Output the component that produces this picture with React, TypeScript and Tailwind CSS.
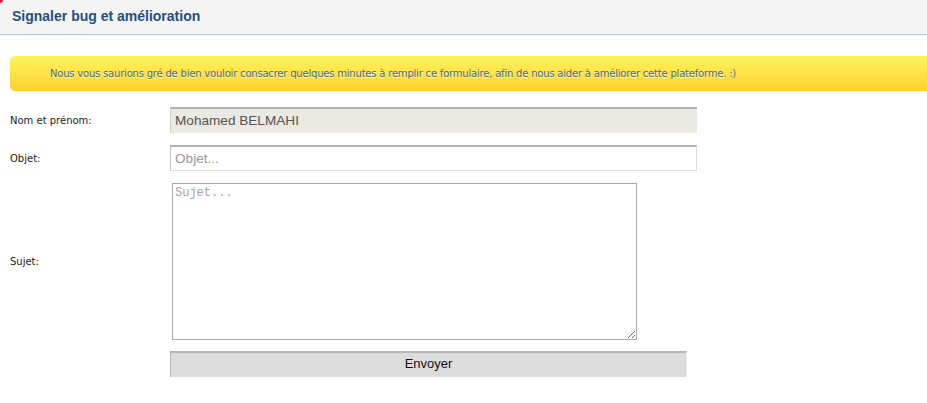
export default function App() {
  return (
    <div className="min-h-[403px] w-[927px] overflow-hidden bg-white font-['DejaVu_Sans',sans-serif]">
      {/* Header */}
      <div className="relative h-[35px] border-b border-[#a9c9d9] bg-[#f4f4f4] pl-3 pt-[8px]">
        <span className="absolute left-0 top-0 h-[3px] w-[3px] rounded-br-full bg-[#e0202c]" />
        <h1 className="font-['Liberation_Sans',sans-serif] text-[14px] font-bold leading-[17px] text-[#23507f]">
          Signaler bug et amélioration
        </h1>
      </div>

      {/* Notice */}
      <div className="ml-[10px] mt-[21px] flex h-[35px] items-center rounded-l-[5px] bg-gradient-to-b from-[#fff45c] to-[#fcd12c] pl-10">
        <p className="text-[10px] tracking-[-0.2px] text-[#4f6b6c] [text-shadow:0_1px_0_rgba(255,255,255,0.7)]">
          Nous vous saurions gré de bien vouloir consacrer quelques minutes à remplir ce formulaire, afin de nous aider à améliorer cette plateforme. :)
        </p>
      </div>

      {/* Form */}
      <form className="mt-[16px] flex flex-col pl-[10px]">
        <div className="flex h-[26px] items-center">
          <label className="w-[160px] text-[10px] text-[#222]">Nom et prénom:</label>
          <div className="flex h-[26px] w-[527px] items-center border-t-2 border-l border-[#b3b3b3] border-l-[#d0d0cc] bg-[#eae9e2] pl-1 font-['Liberation_Sans',sans-serif] text-[13.6px] text-[#555]">
            Mohamed BELMAHI
          </div>
        </div>

        <div className="mt-[12px] flex h-[26px] items-center">
          <label className="w-[160px] text-[10px] text-[#222]">Objet:</label>
          <input
            placeholder="Objet..."
            className="h-[26px] w-[527px] border border-[#dedede] border-t-2 border-t-[#b3b3b3] border-l-[#c4c4c4] bg-white pl-1 font-['Liberation_Sans',sans-serif] text-[13.6px] text-[#555] outline-none placeholder:text-[#999]"
          />
        </div>

        <div className="mt-[12px] flex items-center">
          <label className="w-[162px] text-[10px] text-[#222]">Sujet:</label>
          <textarea
            placeholder="Sujet..."
            className="h-[157px] w-[465px] border border-[#a9a9a9] bg-white px-[2px] py-[2px] font-['Liberation_Mono',monospace] text-[12px] leading-[15px] text-[#555] outline-none placeholder:text-[#a3a3a3]"
          />
        </div>

        <div className="mt-[11px] flex pl-[160px]">
          <button
            type="button"
            className="h-[26px] w-[517px] border-t-2 border-l border-[#b5b5b5] border-r border-r-[#e8e8e8] bg-[#dcdcdc] pb-[2px] font-['Liberation_Sans',sans-serif] text-[13px] text-[#111]"
          >
            Envoyer
          </button>
        </div>
      </form>
    </div>
  );
}
